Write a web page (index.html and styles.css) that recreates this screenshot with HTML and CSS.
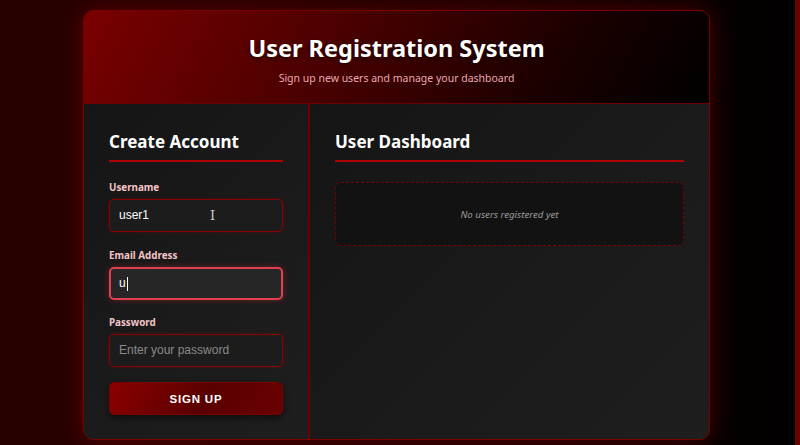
FILE: index.html
```html
<!DOCTYPE html>
<html lang="en">
<head>
<meta charset="utf-8">
<title>User Registration System</title>
<link rel="stylesheet" href="styles.css">
</head>
<body>
<div class="app">
  <header class="header">
    <h1 class="title">User Registration System</h1>
    <p class="subtitle">Sign up new users and manage your dashboard</p>
  </header>
  <main class="content">
    <section class="panel form-panel">
      <h2 class="panel-title">Create Account</h2>
      <form class="form">
        <div class="field">
          <label class="label">Username</label>
          <div class="input">user1<span class="ibeam">I</span></div>
        </div>
        <div class="field">
          <label class="label">Email Address</label>
          <div class="input focused">u<span class="caret"></span></div>
        </div>
        <div class="field">
          <label class="label">Password</label>
          <div class="input placeholder">Enter your password</div>
        </div>
        <button type="button" class="btn">SIGN UP</button>
      </form>
    </section>
    <section class="panel dash-panel">
      <h2 class="panel-title">User Dashboard</h2>
      <div class="empty">No users registered yet</div>
    </section>
  </main>
</div>
</body>
</html>
```
FILE: styles.css
```css
* { box-sizing: border-box; }
html, body { height: 100%; }
body {
  margin: 0;
  font-family: "Noto Sans", "Open Sans", sans-serif;
  background: linear-gradient(90deg, #280000 0%, #220000 35%, #140000 70%, #000 100%);
  border-right: 5px solid #6a0000;
  padding: 10px 0 0 0;
  overflow: hidden;
}
.app {
  width: 627px;
  margin-left: 83px;
  height: 430px;
  border: 1px solid #7a0000;
  border-radius: 10px;
  overflow: hidden;
  box-shadow: 0 0 25px rgba(160, 0, 0, 0.45);
  display: flex;
  flex-direction: column;
  background: #1a1a1a;
}
.header {
  height: 93px;
  background: linear-gradient(120deg, #7a0000 0%, #4a0000 40%, #1a0000 75%, #000 100%);
  border-bottom: 1px solid #6a0000;
  text-align: center;
  padding-top: 22px;
}
.title {
  margin: 0;
  color: #fff;
  font-size: 23.5px;
  font-weight: 700;
  line-height: 30px;
  text-shadow: 0 2px 4px rgba(0,0,0,0.6);
}
.subtitle {
  margin: 8px 0 0;
  color: #e8aab2;
  font-size: 10.5px;
  line-height: 14px;
}
.content {
  flex: 1;
  display: flex;
}
.panel {
  background: linear-gradient(135deg, #151515 0%, #1b1b1b 60%, #1e1e1e 100%);
  padding: 26px 25px 0 25px;
}
.form-panel {
  width: 226px;
  border-right: 2px solid #6a0000;
}
.dash-panel { flex: 1; }
.panel-title {
  margin: 0;
  color: #fff;
  font-size: 17px;
  font-weight: 700;
  line-height: 24px;
  padding-bottom: 6px;
  border-bottom: 2px solid #b00000;
}
.form { margin-top: 19px; display: flex; flex-direction: column; }
.field { margin-bottom: 17px; }
.field:nth-of-type(2) { margin-bottom: 16px; }
.label {
  display: block;
  color: #f4c4c8;
  font-size: 9.8px;
  font-weight: 700;
  line-height: 14px;
  margin-bottom: 4px;
}
.input {
  position: relative;
  height: 33px;
  border: 1px solid #8b0000;
  border-radius: 5px;
  background: #1c1c1c;
  color: #fff;
  font-family: "Liberation Sans", Arial, sans-serif;
  font-size: 12px;
  line-height: 31px;
  padding: 0 9px;
  box-shadow: 0 0 3px rgba(160, 0, 0, 0.4);
}
.input.focused {
  border: 2px solid #e0404e;
  background: #262626;
  line-height: 29px;
  padding: 0 8px;
  box-shadow: 0 0 6px rgba(220, 40, 60, 0.4);
}
.input.placeholder { color: #8a8a8a; }
.caret {
  display: inline-block;
  width: 1px;
  height: 14px;
  background: #fff;
  vertical-align: middle;
  margin-left: 1px;
}
.ibeam {
  position: absolute;
  left: 100px;
  top: 0;
  color: #ccc;
  font-family: "DejaVu Serif", serif;
  font-size: 13px;
}
.btn {
  margin-top: -2px;
  height: 33px;
  border: 1px solid #7a0000;
  border-radius: 5px;
  background: linear-gradient(120deg, #8b0000 0%, #5a0000 55%, #6a0000 100%);
  color: #fff;
  font-family: "Liberation Sans", Arial, sans-serif;
  font-weight: 700;
  font-size: 11.5px;
  letter-spacing: 0.8px;
  box-shadow: 0 3px 6px rgba(0,0,0,0.5);
}
.empty {
  margin-top: 20px;
  height: 64px;
  border: 1px dashed #7a0000;
  border-radius: 6px;
  background: #121212;
  display: flex;
  align-items: center;
  justify-content: center;
  color: #9a9a9a;
  font-style: italic;
  font-size: 9.7px;
}
```
